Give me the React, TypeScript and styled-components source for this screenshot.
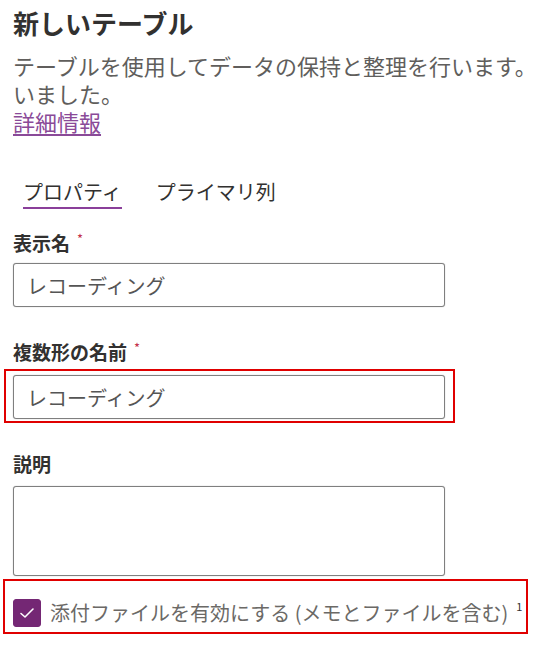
import React, { useState } from "react";
import styled, { createGlobalStyle } from "styled-components";

const GlobalStyle = createGlobalStyle`
  html, body {
    margin: 0;
    padding: 0;
    background: #ffffff;
    overflow: hidden;
  }
  body {
    font-family: "Noto Sans CJK JP", "Noto Sans", sans-serif;
    color: #323130;
  }
`;

const App: React.FC<{}> = () => {
  const [activeTab, setActiveTab] = useState<number>(0);
  const [attachments, setAttachments] = useState<boolean>(true);

  const tabs = ["プロパティ", "プライマリ列"];

  return (
    <Panel>
      <GlobalStyle />
      <Title>新しいテーブル</Title>
      <Description>
        <Line>テーブルを使用してデータの保持と整理を行います。以前はエンティティと呼ばれて</Line>
        <Line>いました。</Line>
      </Description>
      <MoreLink href="#">詳細情報</MoreLink>

      <TabList>
        {tabs.map((tab, index) => {
          return (
            <Tab
              key={tab}
              $active={index === activeTab}
              onClick={() => setActiveTab(index)}
            >
              {tab}
            </Tab>
          );
        })}
      </TabList>

      <Label $gap={21}>
        表示名<Required>*</Required>
      </Label>
      <TextInput defaultValue="レコーディング" />

      <Label $gap={32}>
        複数形の名前<Required>*</Required>
      </Label>
      <InputHighlight>
        <TextInput defaultValue="レコーディング" />
      </InputHighlight>

      <Label $gap={28}>説明</Label>
      <TextArea />

      <CheckHighlight>
        <CheckRow onClick={() => setAttachments((prev) => !prev)}>
          <CheckBox $checked={attachments}>
            {attachments && (
              <svg width="18" height="18" viewBox="0 0 18 18">
                <polyline
                  points="3,9.5 7,13 15,5"
                  fill="none"
                  stroke="#ffffff"
                  strokeWidth="1.6"
                  strokeLinecap="round"
                  strokeLinejoin="round"
                />
              </svg>
            )}
          </CheckBox>
          <CheckLabel>
            添付ファイルを有効にする (メモとファイルを含む)
            <Footnote>1</Footnote>
          </CheckLabel>
        </CheckRow>
      </CheckHighlight>
    </Panel>
  );
};

export default App;

const Panel = styled.div`
  display: flex;
  flex-direction: column;
  align-items: flex-start;
  padding: 6px 0 0 13px;
  width: 520px;
`;

const Title = styled.h1`
  margin: 0;
  font-size: 26px;
  line-height: 34px;
  font-weight: 700;
  color: #323130;
`;

const Description = styled.div`
  margin-top: 11px;
  font-size: 22px;
  line-height: 28px;
  color: #605e5c;
`;

const Line = styled.div`
  white-space: nowrap;
`;

const MoreLink = styled.a`
  font-size: 22px;
  line-height: 28px;
  color: #8a4a98;
  text-decoration: underline;
  text-underline-offset: 3px;
`;

const TabList = styled.div`
  display: flex;
  gap: 34px;
  margin: 43px 0 0 10px;
`;

const Tab = styled.div<{ $active?: boolean }>`
  font-size: 20px;
  line-height: 28px;
  padding-bottom: 1px;
  color: #323130;
  cursor: pointer;
  border-bottom: 2px solid ${(p) => (p.$active ? "#8a3f9a" : "transparent")};
`;

const Label = styled.div<{ $gap: number }>`
  margin-top: ${(p) => p.$gap}px;
  font-size: 19px;
  line-height: 26px;
  font-weight: 700;
  color: #323130;
  display: flex;
  align-items: flex-start;
`;

const Required = styled.span`
  color: #c4314b;
  font-size: 13px;
  line-height: 18px;
  margin-left: 7px;
  font-weight: 400;
`;

const TextInput = styled.input`
  box-sizing: border-box;
  display: block;
  width: 432px;
  height: 44px;
  margin-top: 7px;
  padding: 0 13px;
  border: 1px solid #7f7f7f;
  border-radius: 3px;
  box-shadow: 0 0 1px #9a9a9a;
  font-family: "Noto Sans CJK JP", "Noto Sans", sans-serif;
  font-size: 20px;
  color: #555555;
  outline: none;
`;

const InputHighlight = styled.div`
  margin: 4px 0 0 -9px;
  padding: 4px 8px 2px 7px;
  border: 2px solid #e00000;

  ${TextInput} {
    margin-top: 0;
  }
`;

const TextArea = styled.textarea`
  box-sizing: border-box;
  display: block;
  width: 432px;
  height: 90px;
  margin-top: 9px;
  border: 1px solid #7f7f7f;
  border-radius: 3px;
  box-shadow: 0 0 1px #9a9a9a;
  resize: none;
  outline: none;
`;

const CheckHighlight = styled.div`
  box-sizing: border-box;
  width: 525px;
  margin: 3px 0 0 -10px;
  padding: 18px 8px 5px 8px;
  border: 2px solid #e00000;
`;

const CheckRow = styled.div`
  display: flex;
  align-items: center;
  gap: 9px;
  cursor: pointer;
`;

const CheckBox = styled.div<{ $checked?: boolean }>`
  box-sizing: border-box;
  width: 28px;
  height: 28px;
  border-radius: 3px;
  display: flex;
  align-items: center;
  justify-content: center;
  background: ${(p) => (p.$checked ? "#742774" : "#ffffff")};
  border: 1px solid ${(p) => (p.$checked ? "#742774" : "#605e5c")};
  flex-shrink: 0;
`;

const CheckLabel = styled.div`
  font-size: 20px;
  line-height: 28px;
  color: #6b6966;
  white-space: nowrap;
  display: flex;
  align-items: flex-start;
`;

const Footnote = styled.span`
  font-size: 11px;
  line-height: 14px;
  margin-left: 8px;
  color: #323130;
`;
